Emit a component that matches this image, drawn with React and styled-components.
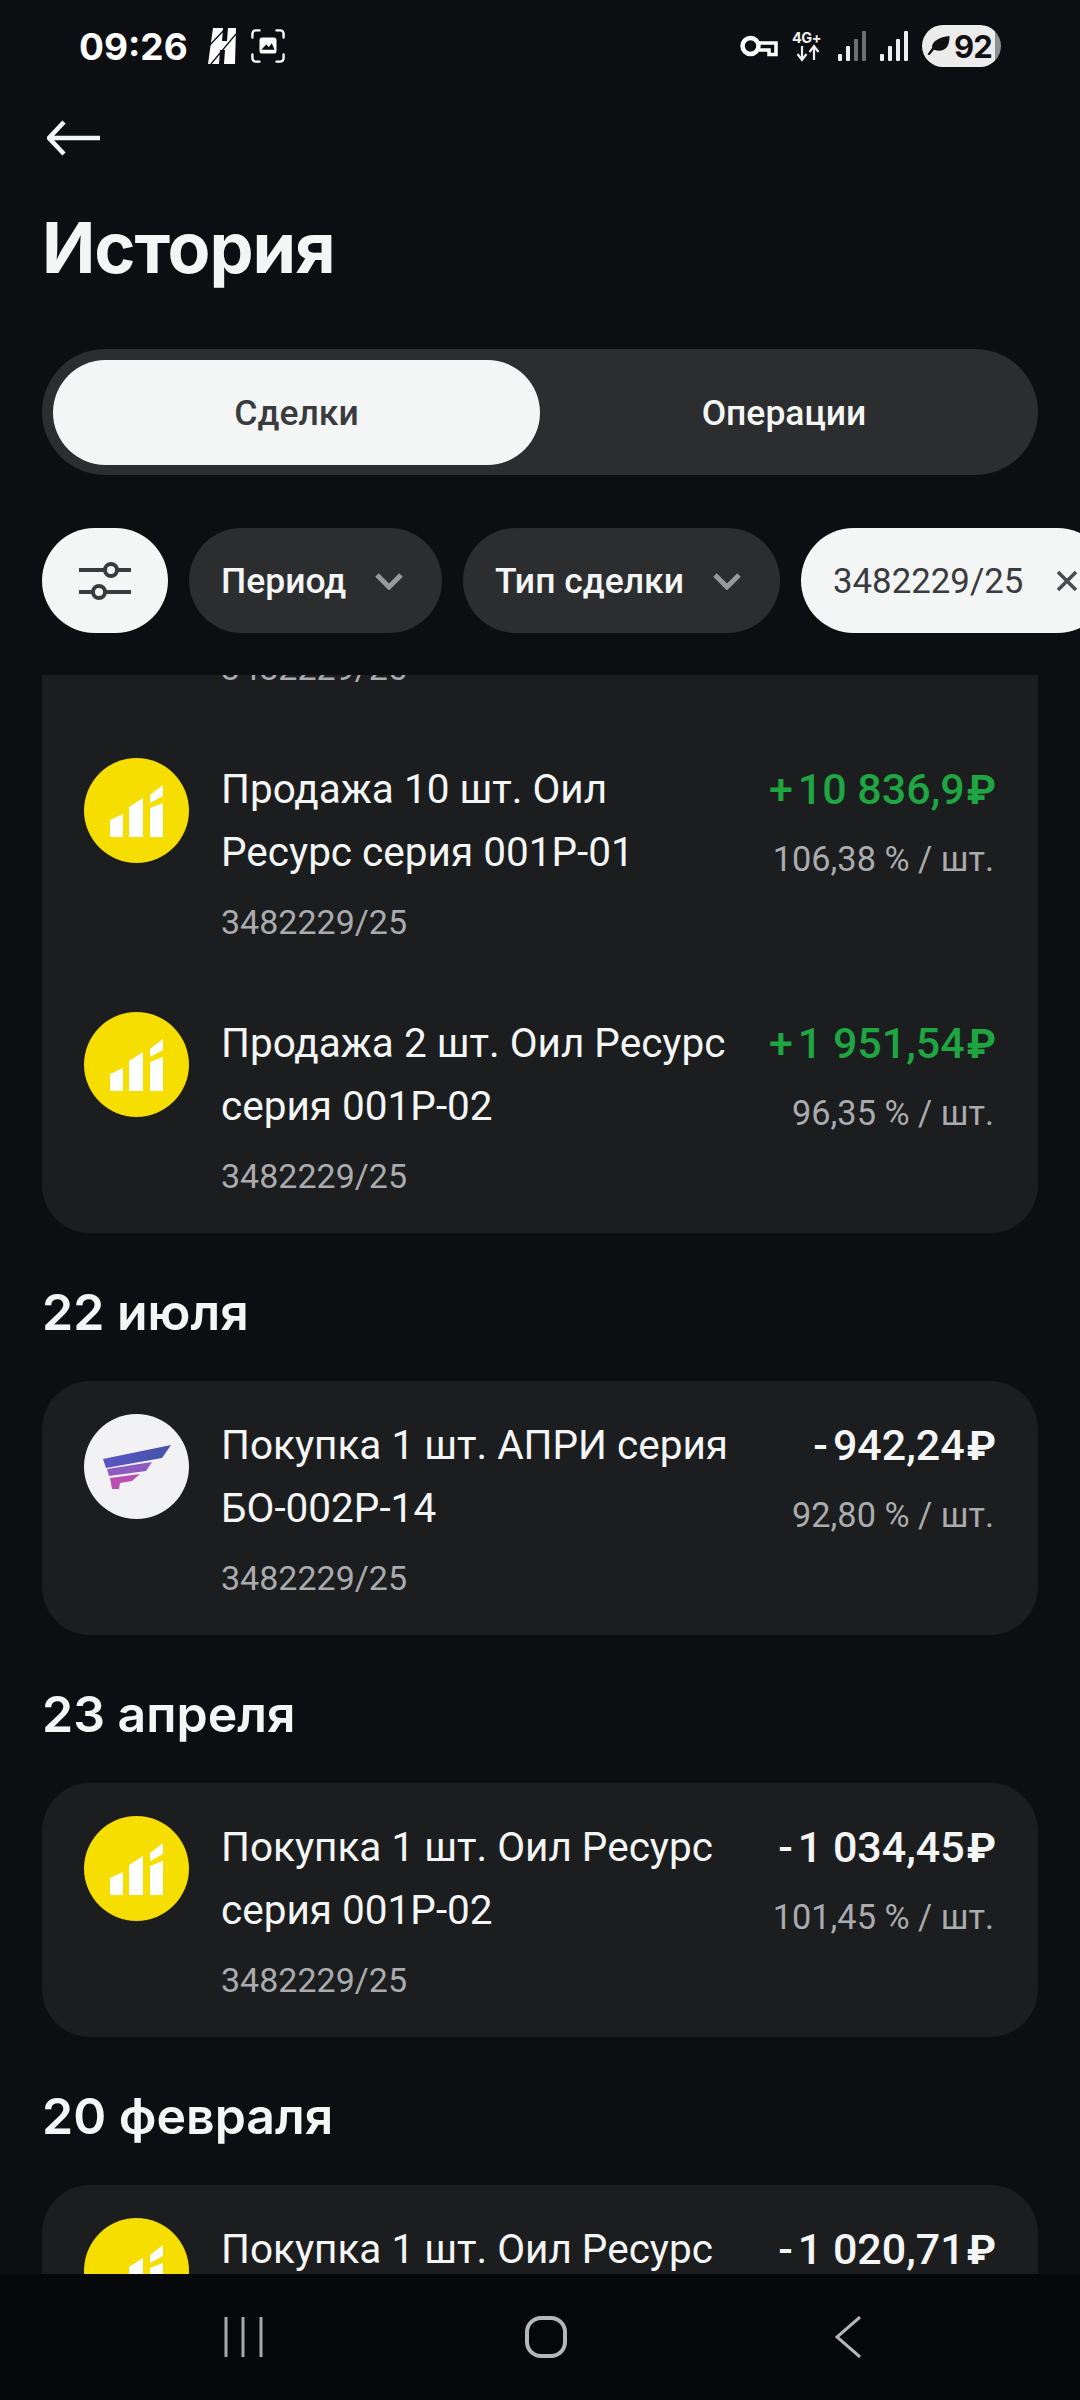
import React from 'react';
import styled, { createGlobalStyle } from 'styled-components';

const GlobalStyle = createGlobalStyle`
    html, body {
        margin: 0;
        padding: 0;
        background: #0d0e12;
    }
    * {
        box-sizing: border-box;
    }
`;

const Screen = styled.div`
    width: 1080px;
    height: 2400px;
    display: flex;
    flex-direction: column;
    overflow: hidden;
    background: #0d0e12;
    font-family: Roboto, sans-serif;
    color: #f4f6f6;
`;

const StatusBar = styled.div`
    height: 92px;
    flex: none;
    display: flex;
    align-items: center;
    justify-content: space-between;
    padding: 0 79px 0 79px;
`;

const StatusGroup = styled.div`
    display: flex;
    align-items: center;
    gap: ${props => props.gap || 0}px;
`;

const Clock = styled.span`
    font-family: Inter, sans-serif;
    font-size: 37px;
    font-weight: 700;
    color: #fff;
    margin-right: 5px;
`;

const Battery = styled.div`
    width: 79px;
    height: 42px;
    border-radius: 21px;
    display: flex;
    align-items: center;
    padding: 0 0 0 5px;
    gap: 3px;
    background: linear-gradient(90deg, #ececec 0 92%, #8f8f8f 92%);
    color: #111;
    font-family: Inter, sans-serif;
    font-size: 31px;
    font-weight: 700;
    letter-spacing: -1px;
`;

const BackRow = styled.div`
    height: 92px;
    flex: none;
    padding: 0 0 0 47px;
    display: flex;
    align-items: center;
`;

const Title = styled.h1`
    margin: 0;
    padding: 0 0 0 42px;
    height: 165px;
    flex: none;
    font-family: Inter, sans-serif;
    font-size: 70px;
    line-height: 128px;
    font-weight: 650;
    letter-spacing: -1px;
    color: #f4f6f6;
`;

const Tabs = styled.div`
    flex: none;
    margin: 0 42px;
    height: 126px;
    padding: 11px 10px 10px 11px;
    border-radius: 63px;
    background: #2c2d2f;
    display: grid;
    grid-template-columns: 487px 1fr;
`;

const Tab = styled.div`
    display: flex;
    align-items: center;
    justify-content: center;
    border-radius: 53px;
    font-size: 35.5px;
    font-weight: 500;
    background: ${props => props.active ? '#f4f6f6' : 'transparent'};
    color: ${props => props.active ? '#3a3b3e' : '#f4f6f6'};
`;

const Filters = styled.div`
    flex: none;
    display: flex;
    gap: 21px;
    height: 105px;
    margin-top: 53px;
    padding-left: 42px;
    width: 1080px;
    overflow: hidden;
`;

const Chip = styled.div`
    flex: none;
    height: 105px;
    border-radius: 53px;
    display: flex;
    align-items: center;
    justify-content: space-between;
    white-space: nowrap;
    width: ${props => props.width}px;
    padding: 0 ${props => props.right}px 0 32px;
    font-size: ${props => props.light ? 34.8 : 35.5}px;
    font-weight: ${props => props.light ? 400 : 500};
    background: ${props => props.light ? '#f4f6f6' : '#2c2d2f'};
    color: ${props => props.light ? '#3a3b3e' : '#f4f6f6'};
`;

const IconChip = styled(Chip)`
    justify-content: center;
    padding: 0;
`;

const Feed = styled.div`
    flex: 1;
    min-height: 0;
    margin-top: 42px;
    overflow: hidden;
`;

const FeedInner = styled.div`
    margin-top: ${props => props.offset}px;
    padding: 0 42px;
    display: flex;
    flex-direction: column;
`;

const DateTitle = styled.h2`
    margin: 0;
    height: 148px;
    display: flex;
    align-items: center;
    padding: 10px 0 0 0;
    font-family: Inter, sans-serif;
    font-size: 50px;
    font-weight: 600;
    color: #f4f6f6;
`;

const Card = styled.div`
    background: #1c1d1f;
    border-radius: 48px;
    padding: 33px 44px 0 42px;
    display: flex;
    flex-direction: column;
    gap: 33px;
`;

const Row = styled.div`
    height: 221px;
    display: flex;
    align-items: flex-start;
`;

const Logo = styled.div`
    flex: none;
    width: 105px;
    height: 105px;
    border-radius: 50%;
    background: ${props => props.bg};
    display: flex;
    align-items: center;
    justify-content: center;
    margin-right: 32px;
`;

const Info = styled.div`
    flex: 1;
    min-width: 0;
`;

const RowName = styled.div`
    font-size: 40.5px;
    line-height: 63px;
    color: #f4f6f6;
    width: 515px;
`;

const RowNumber = styled.div`
    font-size: 34px;
    line-height: 44px;
    margin-top: 16px;
    color: #a9abae;
`;

const Amounts = styled.div`
    flex: none;
    text-align: right;
    white-space: nowrap;
`;

const Amount = styled.div`
    font-size: 43px;
    line-height: 63px;
    font-weight: 500;
    margin-right: -2px;
    color: ${props => props.plus ? '#1fa541' : '#f4f6f6'};
`;

const Sign = styled.span`
    margin-right: 5px;
`;

const Rub = styled.span`
    margin-left: 2px;
    font-size: 41.5px;
    font-weight: 700;
`;

const Price = styled.div`
    font-size: 34.3px;
    line-height: 44px;
    margin-top: 16px;
    color: #a9abae;
`;

const NavBar = styled.div`
    flex: none;
    height: 126px;
    background: #06070a;
    display: grid;
    grid-template-columns: repeat(3, 302px);
    justify-content: center;
    align-items: center;
    justify-items: center;
    padding-left: 12px;
`;

const KeyIcon = () => (
    <svg width="38" height="22" viewBox="0 0 38 22" fill="none">
        <circle cx="10.500" cy="11" r="8" stroke="#fff" strokeWidth="4.500" />
        <path d="M19 8H36V19.500H29V15H19" stroke="#fff" strokeWidth="3.500" />
    </svg>
);

const HIcon = () => (
    <svg width="28" height="36" viewBox="0 0 28 36" fill="none">
        <path d="M5 0H15L14 13H19L20 0H28L27 36H16L17 22H12L11 36H0Z" fill="#fff" />
        <path d="M0 19L17 1M3 36L28 6" stroke="#0d0e12" strokeWidth="1.300" />
    </svg>
);

const ScanIcon = () => (
    <svg width="34" height="34" viewBox="0 0 36 36" fill="none">
        <path d="M1.500 9V5A3.500 3.500 0 0 1 5 1.500H9M27 1.500H31A3.500 3.500 0 0 1 34.500 5V9M34.500 27V31A3.500 3.500 0 0 1 31 34.500H27M9 34.500H5A3.500 3.500 0 0 1 1.500 31V27" stroke="#fff" strokeWidth="2.500" strokeLinecap="round" />
        <rect x="9" y="9" width="18" height="17" rx="3" fill="#fff" />
        <path d="M11 22L16 16.500L19 19L22 15L25 22Z" fill="#0d0e12" />
    </svg>
);

const NetworkIcon = () => (
    <svg width="32" height="31" viewBox="0 0 32 31" fill="#eee">
        <text x="0" y="12" fontFamily="Inter, sans-serif" fontSize="14.500" fontWeight="700" letterSpacing="-0.500">4G+</text>
        <path d="M10 15V28M5.500 23L10 29L14.500 23M22 29V16M17.500 21L22 15L26.500 21" fill="none" stroke="#eee" strokeWidth="2.200" />
    </svg>
);

const SignalIcon = ({ dim }) => (
    <svg width="28" height="30" viewBox="0 0 28 30">
        <rect x="0" y="23" width="4" height="7" rx="1" fill="#eee" />
        <rect x="8" y="15" width="4" height="15" rx="1" fill="#eee" />
        <rect x="16" y="8" width="4" height="22" rx="1" fill={dim ? '#6d6e70' : '#eee'} />
        <rect x="24" y="0" width="4" height="30" rx="1" fill={dim ? '#6d6e70' : '#eee'} />
    </svg>
);

const LeafIcon = () => (
    <svg width="24" height="22" viewBox="0 0 25 24" fill="#111">
        <path d="M24 1C24 12 20 18 10 17L7 16L2 22L0 21L5 14C4 7 13 2 24 1Z" />
    </svg>
);

const BackArrow = () => (
    <svg width="54" height="36" viewBox="0 0 54 36" fill="none">
        <path d="M17 2L2 18L17 34M2 18H53" stroke="#f4f6f6" strokeWidth="4.500" />
    </svg>
);

const SlidersIcon = () => (
    <svg width="54" height="44" viewBox="0 0 54 44" fill="none" stroke="#3a3b3e" strokeWidth="4">
        <path d="M1 11H26M40 11H53M1 33H14M28 33H53" />
        <circle cx="33" cy="11" r="6" />
        <circle cx="21" cy="33" r="6" />
    </svg>
);

const Chevron = () => (
    <svg width="30" height="18" viewBox="0 0 30 18" fill="none">
        <path d="M3 3L15 15L27 3" stroke="#98999b" strokeWidth="5" />
    </svg>
);

const CloseIcon = () => (
    <svg width="22" height="22" viewBox="0 0 22 22" fill="none">
        <path d="M2 2L20 20M20 2L2 20" stroke="#4a4b4e" strokeWidth="3.500" />
    </svg>
);

const OilLogo = () => (
    <svg width="54" height="53" viewBox="0 0 54 53" fill="#fff">
        <path d="M0 36L13 30V53H0ZM19 23L33 14V53H19ZM40 24L53 19V53H40ZM40 11L53 1V12L40 19Z" />
    </svg>
);

const AprLogo = () => (
    <svg width="68" height="44" viewBox="0 0 68 44">
        <defs>
            <linearGradient id="wingTop" x1="0" x2="1" y1="0" y2="0">
                <stop offset="0" stopColor="#5a55c4" />
                <stop offset="1" stopColor="#4453a8" />
            </linearGradient>
        </defs>
        <path d="M0 14L68 0L59 13L3 23Z" fill="url(#wingTop)" />
        <path d="M4 24L49 17L43 26L6 31Z" fill="#8d5ac2" />
        <path d="M7 33L37 29L29 36L17 38L16 44H9Z" fill="#b94fb0" />
    </svg>
);

const logos = {
    oil: { bg: '#f6de00', mark: <OilLogo /> },
    apr: { bg: '#f2f2f4', mark: <AprLogo /> },
};

const Deal = ({ logo, name, sign, amount, price, plus }) => (
    <Row>
        <Logo bg={logos[logo].bg}>{logos[logo].mark}</Logo>
        <Info>
            <RowName>{name}</RowName>
            <RowNumber>3482229/25</RowNumber>
        </Info>
        <Amounts>
            <Amount plus={plus}>
                <Sign>{sign}</Sign>
                {amount}
                <Rub>₽</Rub>
            </Amount>
            <Price>{price}</Price>
        </Amounts>
    </Row>
);

export default function App() {
    return (
        <Screen>
            <GlobalStyle />
            <StatusBar>
                <StatusGroup gap={15}>
                    <Clock>09:26</Clock>
                    <HIcon />
                    <ScanIcon />
                </StatusGroup>
                <StatusGroup gap={14}>
                    <KeyIcon />
                    <NetworkIcon />
                    <SignalIcon dim />
                    <SignalIcon />
                    <Battery>
                        <LeafIcon />
                        92
                    </Battery>
                </StatusGroup>
            </StatusBar>
            <BackRow>
                <BackArrow />
            </BackRow>
            <Title>История</Title>
            <Tabs>
                <Tab active>Сделки</Tab>
                <Tab>Операции</Tab>
            </Tabs>
            <Filters>
                <IconChip light width={126}>
                    <SlidersIcon />
                </IconChip>
                <Chip width={253} right={38}>
                    <span>Период</span>
                    <Chevron />
                </Chip>
                <Chip width={317} right={38}>
                    <span>Тип сделки</span>
                    <Chevron />
                </Chip>
                <Chip light width={309} right={32}>
                    <span>3482229/25</span>
                    <CloseIcon />
                </Chip>
            </Filters>
            <Feed>
                <FeedInner offset={-204}>
                    <Card>
                        <Deal logo="oil" name="Продажа 10 шт. Оил Ресурс серия 001Р-01" sign="+" amount="10 836,9" price="106,38 % / шт." plus />
                        <Deal logo="oil" name="Продажа 10 шт. Оил Ресурс серия 001Р-01" sign="+" amount="10 836,9" price="106,38 % / шт." plus />
                        <Deal logo="oil" name="Продажа 2 шт. Оил Ресурс серия 001Р-02" sign="+" amount="1 951,54" price="96,35 % / шт." plus />
                    </Card>
                    <DateTitle>22 июля</DateTitle>
                    <Card>
                        <Deal logo="apr" name="Покупка 1 шт. АПРИ серия БО-002Р-14" sign="-" amount="942,24" price="92,80 % / шт." />
                    </Card>
                    <DateTitle>23 апреля</DateTitle>
                    <Card>
                        <Deal logo="oil" name="Покупка 1 шт. Оил Ресурс серия 001Р-02" sign="-" amount="1 034,45" price="101,45 % / шт." />
                    </Card>
                    <DateTitle>20 февраля</DateTitle>
                    <Card>
                        <Deal logo="oil" name="Покупка 1 шт. Оил Ресурс серия 001Р-02" sign="-" amount="1 020,71" price="100,07 % / шт." />
                    </Card>
                </FeedInner>
            </Feed>
            <NavBar>
                <svg width="42" height="40" viewBox="0 0 42 40" stroke="#a8a9ab" strokeWidth="3" fill="none">
                    <path d="M3 0V40M20 0V40M38 0V40" />
                </svg>
                <svg width="42" height="42" viewBox="0 0 42 42" fill="none">
                    <rect x="2" y="2" width="38" height="38" rx="14" stroke="#b5b6b8" strokeWidth="4" />
                </svg>
                <svg width="26" height="42" viewBox="0 0 26 42" fill="none">
                    <path d="M25 1L2 21L25 41" stroke="#b5b6b8" strokeWidth="3" />
                </svg>
            </NavBar>
        </Screen>
    );
}
